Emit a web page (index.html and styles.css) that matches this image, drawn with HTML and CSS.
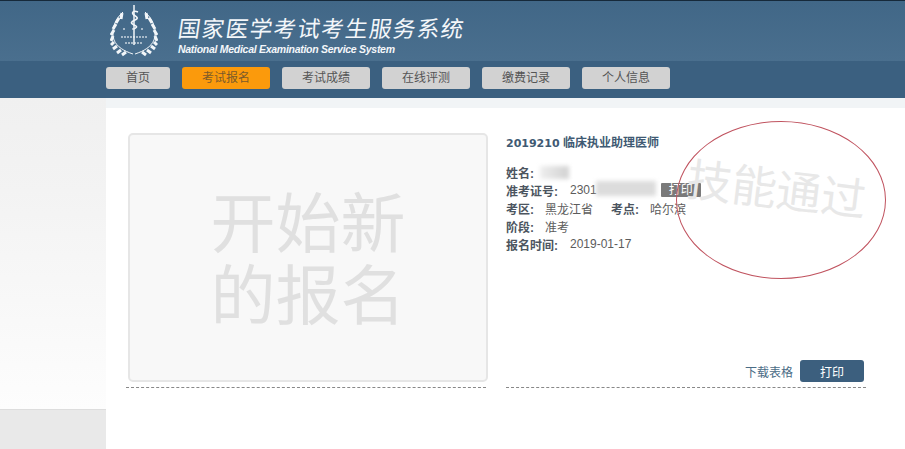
FILE: index.html
```html
<!DOCTYPE html>
<html>
<head>
  <meta charset="utf-8">
  <title>国家医学考试考生服务系统</title>
  <link rel="stylesheet" href="styles.css">
</head>
<body>
  <div class="header">
    <div class="brand">
      <svg class="logo" width="48" height="52" viewBox="0 0 48 52" fill="none" stroke="#f2f6f9">
        <!-- staff and snake -->
        <path d="M24 0V40" stroke-width="1.5"/>
        <path d="M28 7c-5-2-7 1-4 3s5 3 1 5-5 3-1 5 3 2 0 4" stroke-width="1.6"/>
        <!-- laurel stems -->
        <path d="M13 7C4 15 1 26 4 35c3 7 10 11 19 14" stroke-width="1"/>
        <path d="M35 7c9 8 12 19 9 28-3 7-10 11-19 14" stroke-width="1"/>
        <!-- laurel leaves -->
        <path d="M12 8l-1 6 M9 13l-3 5 M6 19l-3 5 M4 25l-3 5 M3 31l-2 5 M4 37l-3 3 M7 41l-4 3 M11 45l-4 3 M16 47l-4 3 M36 8l1 6 M39 13l3 5 M42 19l3 5 M44 25l3 5 M45 31l2 5 M44 37l3 3 M41 41l4 3 M37 45l4 3 M32 47l4 3" stroke-width="3"/>
        <!-- small seal lettering -->
        <path d="M13 24h3 M22 24h3 M31 24h3 M11 32h26 M15 38h18" stroke-width="1.5" stroke-dasharray="2 1" opacity=".75"/>
      </svg>
      <div class="brand-text">
        <div class="brand-cn">国家医学考试考生服务系统</div>
        <div class="brand-en">National Medical Examination Service System</div>
      </div>
    </div>
  </div>
  <div class="nav">
    <a class="nav-item nav-home">首页</a>
    <a class="nav-item active">考试报名</a>
    <a class="nav-item">考试成绩</a>
    <a class="nav-item">在线评测</a>
    <a class="nav-item">缴费记录</a>
    <a class="nav-item">个人信息</a>
  </div>

  <div class="page">
    <div class="sidebar">
      <div class="sidebar-fade"></div>
      <div class="sidebar-foot"></div>
    </div>
    <div class="main">
      <div class="col-left">
        <div class="new-card">开始新<br>的报名</div>
      </div>
      <div class="col-right">
        <div class="exam-title"><span class="exam-code">2019210</span> 临床执业助理医师</div>
        <div class="info">
          <div class="info-row"><b>姓名:</b></div>
          <div class="info-row"><b>准考证号:</b><span class="val">2301</span><span class="print-tag">打印</span></div>
          <div class="info-row"><b>考区:</b><span class="val-sm">黑龙江省</span><b class="second">考点:</b><span class="val-sm">哈尔滨</span></div>
          <div class="info-row"><b>阶段:</b><span class="val-sm">准考</span></div>
          <div class="info-row"><b>报名时间:</b><span class="val">2019-01-17</span></div>
        </div>
        <div class="actions">
          <a class="download">下载表格</a>
          <button class="print-btn">打印</button>
        </div>
      </div>
      <div class="blur blur-name"></div>
      <div class="blur blur-id"></div>
      <div class="stamp"><span>技能通过</span></div>
    </div>
  </div>
</body>
</html>
```

FILE: styles.css
```css
* {
  box-sizing: border-box;
}
body {
  margin: 0;
  height: 449px;
  overflow: hidden;
  font-family: "Liberation Sans", "Noto Sans CJK SC", sans-serif;
  font-size: 12px;
  color: #555;
  background-color: #fff;
}
.header {
  height: 61px;
  padding-left: 110px;
  border-top: 1px solid #16293a;
  background: linear-gradient(#416787, #4a6f8e);
}
.brand {
  display: flex;
  align-items: flex-start;
}
.logo {
  margin-top: 4px;
}
.brand-text {
  margin-left: 20px;
  padding-top: 15px;
  color: #f4f7fa;
}
.brand-cn {
  font-size: 22.5px;
  line-height: 27px;
  letter-spacing: 1.4px;
  transform: skewX(-8deg);
}
.brand-en {
  font-size: 10.5px;
  line-height: 12px;
  letter-spacing: -0.28px;
  font-weight: bold;
  font-style: italic;
}
.nav {
  display: flex;
  gap: 12px;
  height: 37px;
  padding: 6px 0 0 106px;
  background-color: #3b6080;
}
.nav-item {
  width: 88px;
  height: 22px;
  border-radius: 3px;
  background-color: #d2d2d2;
  color: #555;
  font-size: 12px;
  line-height: 22px;
  text-align: center;
}
.nav-home {
  width: 64px;
}
.nav-item.active {
  background-color: #fb9a0c;
  color: #7b5a2a;
}
.page {
  display: flex;
  height: 351px;
  background: linear-gradient(#f1f4f6 10px, #fff 10px);
}
.sidebar {
  display: flex;
  flex-direction: column;
  width: 106px;
}
.sidebar-fade {
  height: 312px;
  border-bottom: 1px solid #ddd;
  background: linear-gradient(#f0f0f0, #f3f3f3 30%, #fdfdfd);
}
.sidebar-foot {
  flex: 1;
  background-color: #e9e9e9;
}
.main {
  position: relative;
  display: flex;
  flex: 1;
  gap: 20px;
  margin-top: 10px;
  padding: 25px 0 0 20px;
  border-radius: 6px 0 0 0;
  background-color: #fff;
}
.col-left {
  width: 360px;
  height: 255px;
  border-bottom: 1px dashed #888;
}
.new-card {
  width: 360px;
  height: 249px;
  margin-left: 2px;
  padding-top: 54px;
  border: 2px solid #e6e6e6;
  border-radius: 5px;
  background-color: #f8f8f8;
  color: #e0e0e0;
  font-size: 65px;
  line-height: 72px;
  text-align: center;
}
.col-right {
  display: flex;
  flex-direction: column;
  width: 360px;
  height: 255px;
  border-bottom: 1px dashed #888;
}
.exam-title {
  margin-top: 1px;
  color: #3f5a73;
  font-size: 12px;
  line-height: 18px;
  font-weight: bold;
}
.exam-code {
  font-family: "DejaVu Sans", sans-serif;
  font-size: 11px;
}
.info {
  margin-top: 10px;
}
.info-row {
  display: flex;
  align-items: center;
  height: 18px;
  color: #5c5c5c;
  font-size: 12px;
}
.info-row b {
  color: #4c5560;
  font-weight: bold;
}
.val {
  margin-left: 12px;
}
.val-sm {
  margin-left: 11px;
}
.second {
  margin-left: 18px;
}
.print-tag {
  width: 40px;
  height: 14px;
  margin-left: 64px;
  border-radius: 1px;
  background-color: #7a7a7a;
  color: #fff;
  line-height: 14px;
  text-align: center;
}
.actions {
  display: flex;
  align-items: center;
  justify-content: flex-end;
  gap: 7px;
  margin-top: auto;
  margin-bottom: 5px;
  padding-right: 2px;
}
.download {
  color: #4b6c86;
  font-size: 12px;
}
.print-btn {
  width: 64px;
  height: 22px;
  padding: 0;
  border: none;
  border-radius: 3px;
  background-color: #3c5f7e;
  color: #fff;
  font-family: inherit;
  font-size: 12px;
}
/* privacy smudges sit on top of the text */
.blur {
  position: absolute;
  filter: blur(2px);
}
.blur-name {
  left: 434px;
  top: 58px;
  width: 29px;
  height: 13px;
  background: linear-gradient(90deg, #eee, #d2d2d2);
}
.blur-id {
  left: 490px;
  top: 73px;
  width: 60px;
  height: 15px;
  background-color: #dcdcdc;
}
.stamp {
  position: absolute;
  left: 570px;
  top: 13px;
  display: flex;
  align-items: center;
  justify-content: center;
  width: 210px;
  height: 158px;
  border: 1px solid #c0535f;
  border-radius: 50%;
  color: #e8e8e8;
  font-size: 45px;
}
.stamp span {
  white-space: nowrap;
  transform: translate(-4px, -14px) rotate(7deg);
}
```
